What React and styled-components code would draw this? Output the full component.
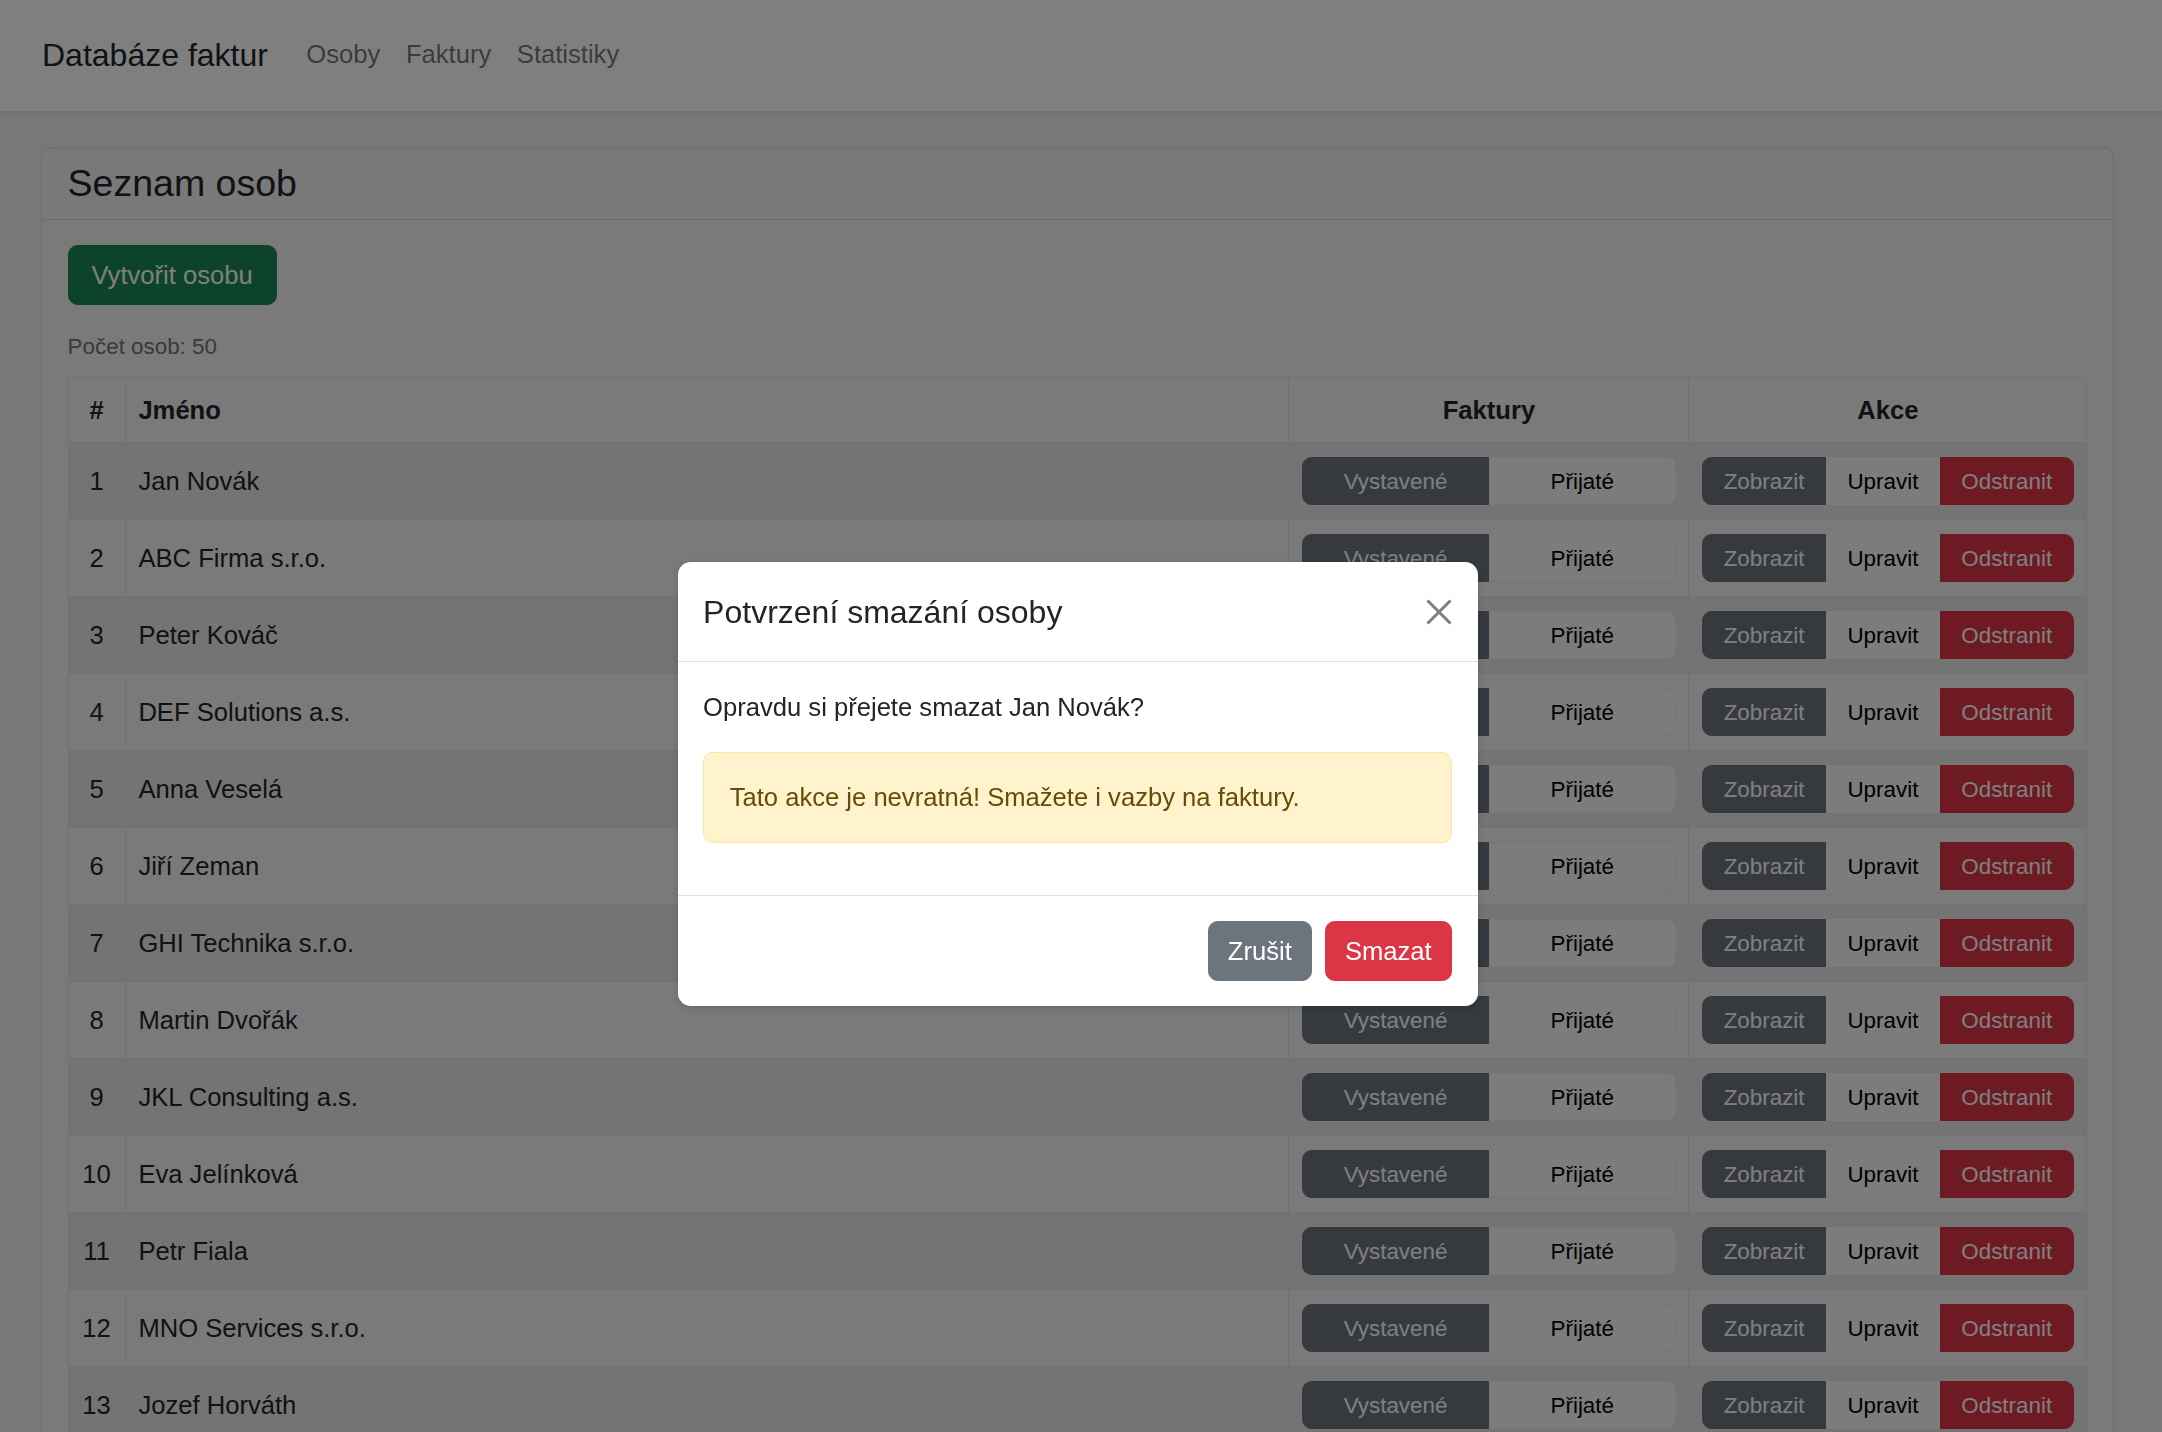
import React from "react";
import styled, { createGlobalStyle } from "styled-components";

const GlobalStyle = createGlobalStyle`
  html, body {
    margin: 0;
    padding: 0;
    overflow: hidden;
  }
  body {
    font-family: "Liberation Sans", Arial, sans-serif;
    font-size: 25.6px;
    line-height: 1.5;
    color: #212529;
    background: #f1f1f1;
  }
  * { box-sizing: border-box; }
`;

const Navbar = styled.nav`
  display: flex;
  align-items: center;
  height: 111px;
  padding: 0 42px 2px;
  background: #ffffff;
  box-shadow: 0 3px 6px rgba(0, 0, 0, 0.08);
  position: relative;
`;

const Brand = styled.a`
  font-size: 32px;
  color: #212529;
  margin-right: 25.6px;
  text-decoration: none;
`;

const NavLink = styled.a`
  padding: 0 12.8px;
  color: rgba(0, 0, 0, 0.55);
  text-decoration: none;
`;

const Main = styled.main`
  padding: 36px 48px 0 41px;
`;

const Card = styled.section`
  background: #f5f5f5;
  border: 1px solid #d9dadb;
  border-radius: 10px;
`;

const CardHeader = styled.div`
  padding: 12.8px 25.6px;
  border-bottom: 1px solid #d9dadb;
  background: rgba(0, 0, 0, 0.01);
`;

const Title = styled.h4`
  margin: 0;
  font-size: 37.5px;
  font-weight: 500;
  line-height: 1.2;
`;

const CardBody = styled.div`
  padding: 25.6px;
`;

const Button = styled.button`
  font-family: inherit;
  font-size: ${(p) => (p.$small ? "22.4px" : "25.6px")};
  line-height: 1.5;
  padding: ${(p) => (p.$small ? "6.4px 12.8px" : "9.6px 19.2px")};
  border: 1px solid ${(p) => p.$border || p.$bg};
  background: ${(p) => p.$bg};
  color: ${(p) => p.$color || "#ffffff"};
  border-radius: 9.6px;
  cursor: pointer;
  white-space: nowrap;
`;

const CreateButton = styled(Button)`
  display: block;
  margin-bottom: 25.6px;
  width: 209px;
`;

const Count = styled.div`
  font-size: 22.4px;
  color: #6c757d;
  margin-bottom: 12.8px;
`;

const Table = styled.table`
  width: 100%;
  border-collapse: collapse;
  border: 1px solid #dee2e6;
`;

const Th = styled.th`
  padding: 13.3px 12.8px 12.8px;
  border: 1px solid #dee2e6;
  font-weight: 700;
  text-align: ${(p) => p.$align || "left"};
  width: ${(p) => p.$width || "auto"};
`;

const Tr = styled.tr`
  background: ${(p) => (p.$odd ? "rgba(0, 0, 0, 0.05)" : "transparent")};
`;

const Td = styled.td`
  padding: 14px 12.8px;
  border: 1px solid #dee2e6;
  vertical-align: middle;
  text-align: ${(p) => p.$align || "left"};
`;

const Group = styled.div`
  display: flex;
  width: 100%;
  height: 48px;

  & > button {
    flex: ${(p) => (p.$equal ? "1 1 0" : "1 1 auto")};
    border-radius: 0;
  }
  & > button:first-child {
    border-top-left-radius: 9.6px;
    border-bottom-left-radius: 9.6px;
  }
  & > button:last-child {
    border-top-right-radius: 9.6px;
    border-bottom-right-radius: 9.6px;
  }
`;

const Backdrop = styled.div`
  position: fixed;
  inset: 0;
  background: rgba(0, 0, 0, 0.5);
  display: flex;
  justify-content: center;
  align-items: flex-start;
  padding: 562px 7px 0 0;
`;

const Modal = styled.div`
  width: 800px;
  background: #ffffff;
  border-radius: 12.8px;
  box-shadow: 0 2px 8px rgba(0, 0, 0, 0.15);
`;

const ModalHeader = styled.div`
  display: flex;
  align-items: center;
  justify-content: space-between;
  padding: 25.6px;
  border-bottom: 1px solid #dee2e6;
`;

const ModalTitle = styled.h5`
  margin: 0;
  font-size: 32px;
  font-weight: 500;
  line-height: 1.5;
`;

const CloseButton = styled.button`
  width: 26px;
  height: 26px;
  padding: 0;
  border: 0;
  background: transparent;
  opacity: 0.5;
  cursor: pointer;
  display: flex;
`;

const ModalBody = styled.div`
  padding: 25.6px;
  p {
    margin: 0 0 25.6px;
  }
`;

const Alert = styled.div`
  padding: 25.6px;
  margin-bottom: 25.6px;
  background: #fff3cd;
  border: 1px solid #ffe69c;
  border-radius: 9.6px;
  color: #664d03;
`;

const ModalFooter = styled.div`
  display: flex;
  justify-content: flex-end;
  gap: 12.8px;
  padding: 25.6px;
  border-top: 1px solid #dee2e6;
`;

const people = [
  "Jan Novák",
  "ABC Firma s.r.o.",
  "Peter Kováč",
  "DEF Solutions a.s.",
  "Anna Veselá",
  "Jiří Zeman",
  "GHI Technika s.r.o.",
  "Martin Dvořák",
  "JKL Consulting a.s.",
  "Eva Jelínková",
  "Petr Fiala",
  "MNO Services s.r.o.",
  "Jozef Horváth",
];

export default function App() {
  return (
    <>
      <GlobalStyle />
      <Navbar>
        <Brand href="#">Databáze faktur</Brand>
        <NavLink href="#">Osoby</NavLink>
        <NavLink href="#">Faktury</NavLink>
        <NavLink href="#">Statistiky</NavLink>
      </Navbar>
      <Main>
        <Card>
          <CardHeader>
            <Title>Seznam osob</Title>
          </CardHeader>
          <CardBody>
            <CreateButton $bg="#198754">Vytvořit osobu</CreateButton>
            <Count>Počet osob: 50</Count>
            <Table>
              <thead>
                <tr>
                  <Th $align="center" $width="57px">#</Th>
                  <Th>Jméno</Th>
                  <Th $align="center" $width="400px">Faktury</Th>
                  <Th $align="center" $width="398px">Akce</Th>
                </tr>
              </thead>
              <tbody>
                {people.map((name, i) => (
                  <Tr key={name} $odd={i % 2 === 0}>
                    <Td $align="center">{i + 1}</Td>
                    <Td>{name}</Td>
                    <Td>
                      <Group $equal>
                        <Button $small $bg="#6c757d">Vystavené</Button>
                        <Button $small $bg="#f8f9fa" $border="#eceef0" $color="#000000">
                          Přijaté
                        </Button>
                      </Group>
                    </Td>
                    <Td>
                      <Group>
                        <Button $small $bg="#6c757d">Zobrazit</Button>
                        <Button $small $bg="#f8f9fa" $color="#000000">Upravit</Button>
                        <Button $small $bg="#dc3545">Odstranit</Button>
                      </Group>
                    </Td>
                  </Tr>
                ))}
              </tbody>
            </Table>
          </CardBody>
        </Card>
      </Main>
      <Backdrop>
        <Modal>
          <ModalHeader>
            <ModalTitle>Potvrzení smazání osoby</ModalTitle>
            <CloseButton aria-label="Zavřít">
              <svg width="26" height="26" viewBox="0 0 26 26">
                <path d="M1.5 1.5 L24.5 24.5 M24.5 1.5 L1.5 24.5" stroke="#000" strokeWidth="3" />
              </svg>
            </CloseButton>
          </ModalHeader>
          <ModalBody>
            <p>Opravdu si přejete smazat Jan Novák?</p>
            <Alert>Tato akce je nevratná! Smažete i vazby na faktury.</Alert>
          </ModalBody>
          <ModalFooter>
            <Button $bg="#6c757d">Zrušit</Button>
            <Button $bg="#dc3545">Smazat</Button>
          </ModalFooter>
        </Modal>
      </Backdrop>
    </>
  );
}
